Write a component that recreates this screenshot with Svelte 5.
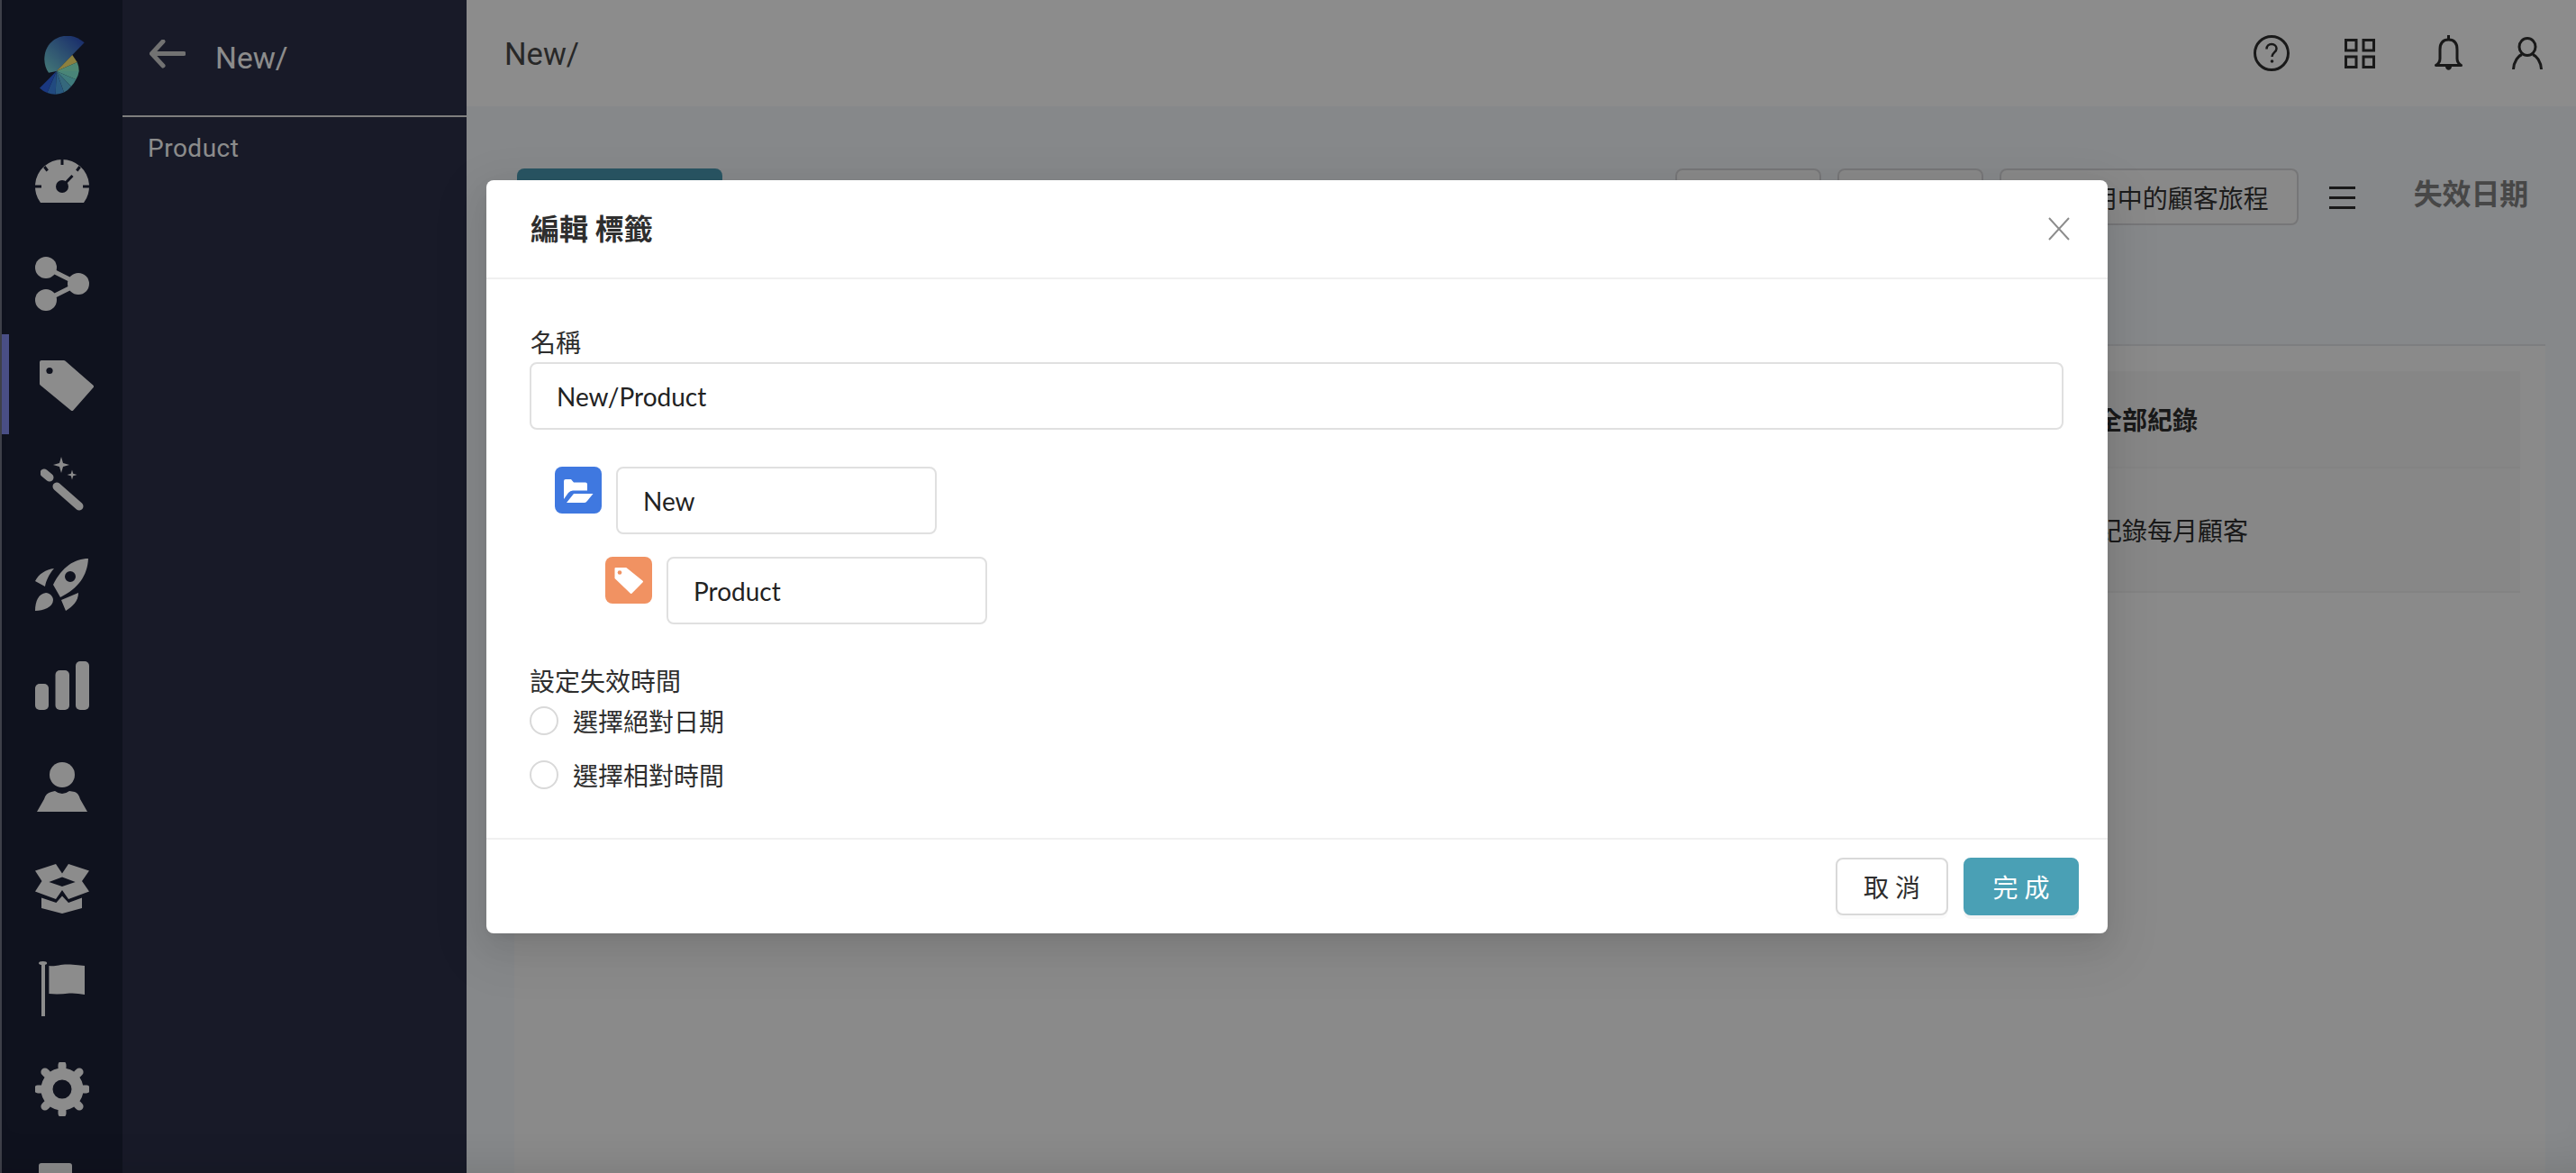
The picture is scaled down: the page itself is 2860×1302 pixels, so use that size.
<script>
  const cx = 67.7, cy = 80;
  const fanPoints = [
    [90.7, 70], [92.7, 80], [89.3, 89.3], [84, 97], [76, 103.6], [66.7, 105.7], [57.3, 104], [49, 98.7]
  ];
  const fanColors = ['#90f7d1', '#86f2da', '#73e0e2', '#62bde2', '#4ea4e9', '#3c87e9', '#3066e9'];
  const fan = fanColors.map((fill, i) => {
    const start = fanPoints[i];
    const end = fanPoints[i + 1];
    return { fill, d: `M${cx} ${cy}L${start[0]} ${start[1]}A25 25 0 0 1 ${end[0]} ${end[1]}Z` };
  });
  const gearTeeth = [0, 45, 90, 135, 180, 225, 270, 315];
</script>

<div class="app">
  <nav class="rail">
    <div class="logo">
      <svg width="50" height="65" viewBox="49 41 50 65" aria-hidden="true">
        <defs>
          <linearGradient id="lg" x1="1" y1="0" x2="0" y2="1">
            <stop offset="0.1" stop-color="#3156c4" />
            <stop offset="1" stop-color="#7ddeda" />
          </linearGradient>
        </defs>
        <path d="M67.7 80L98.7 48.3C92 43 86 40.7 80 40.7C65 40.7 54.3 52 54.3 66.7C54.3 72 56 78 59 81.7Z" fill="url(#lg)" />
        <path d="M67.7 80L85.3 62L90.7 70Z" fill="#ffe974" />
        {#each fan as w}
          <path d={w.d} fill={w.fill} />
        {/each}
      </svg>
    </div>

    <div class="cell">
      <svg width="60" height="48" viewBox="0 0 60 48" aria-hidden="true">
        <path d="M6 48A30 30 0 1 1 54 48Z" fill="#fff" />
        <g stroke="#1d2137" stroke-width="3" fill="none">
          <path d="M30 0V6M10.3 8L13.7 12.5M49.7 8L46.3 12.5M0 30H7M53 30H60" />
          <path d="M30 30L41.5 18" />
        </g>
        <circle cx="30" cy="30" r="7" fill="#1d2137" />
      </svg>
    </div>
    <div class="cell">
      <svg class="share-icon" width="60" height="60" viewBox="0 0 60 60" aria-hidden="true">
        <path d="M12 12L48 30L12 48" fill="none" stroke="#fff" stroke-width="5" />
        <circle cx="12" cy="12" r="12" fill="#fff" />
        <circle cx="48" cy="30" r="12" fill="#fff" />
        <circle cx="12" cy="48" r="12" fill="#fff" />
      </svg>
    </div>
    <div class="cell active">
      <span class="marker"></span>
      <svg class="tag-icon" width="60" height="56" viewBox="0 0 60 56" aria-hidden="true">
        <path d="M2 2H27L58 29L36 54L2 26Z" fill="#fff" stroke="#fff" stroke-width="4" stroke-linejoin="round" />
        <circle cx="11" cy="11.5" r="3.6" fill="#1d2137" />
      </svg>
    </div>
    <div class="cell">
      <svg width="48" height="61" viewBox="45 508 48 61" aria-hidden="true">
        <path d="M49 526L55 531" stroke="#fff" stroke-width="9" stroke-linecap="round" fill="none" />
        <path d="M63 541L88 563" stroke="#fff" stroke-width="9" stroke-linecap="round" fill="none" />
        <path d="M68 508L70 515L77 517L70 519L68 526L66 519L59 517L66 515Z" fill="#fff" />
        <path d="M80 522.5L81.2 526.8L85.5 528L81.2 529.2L80 533.5L78.8 529.2L74.5 528L78.8 526.8Z" fill="#fff" />
      </svg>
    </div>
    <div class="cell">
      <svg width="60" height="59" viewBox="38 621 60 59" aria-hidden="true">
        <path fill-rule="evenodd" d="M97 621C82 621 68 630 58 650L66 664C86 654 96 640 97 621ZM83 641A6 6 0 1 1 71 641A6 6 0 1 1 83 641Z" fill="#fff" />
        <path d="M38 646C42 638 50 633 59 632C53 639 50 646 49 652Z" fill="#fff" />
        <path d="M67 667L86 659C86 668 80 674 72 679Z" fill="#fff" />
        <path d="M38 679C38 668 42 660 50 659C54 659 58 663 58 667C58 675 47 679 38 679Z" fill="#fff" />
      </svg>
    </div>
    <div class="cell">
      <svg width="60" height="54" viewBox="0 0 60 54" aria-hidden="true">
        <rect x="0" y="25" width="15" height="29" rx="5" fill="#fff" />
        <rect x="22.5" y="10" width="15.5" height="44" rx="5" fill="#fff" />
        <rect x="45" y="0" width="15" height="54" rx="5" fill="#fff" />
      </svg>
    </div>
    <div class="cell">
      <svg width="56" height="56" viewBox="40 845 56 56" aria-hidden="true">
        <circle cx="68" cy="860" r="14" fill="#fff" />
        <path d="M40 901L48 887Q50 880 56 879L60 878Q68 884 76 878L82 879Q86 880 88 887L96 901Z" fill="#fff" />
      </svg>
    </div>
    <div class="cell">
      <svg class="box-icon" width="60" height="55" viewBox="0 0 60 55" aria-hidden="true">
        <path fill-rule="evenodd" d="M0 7.5L23 0L30 10.5L37 0L60 7.5L52 19L60 30.5L37 39L30 29L23 39L0 30.5L7.5 19ZM15.4 20L30 25L44.7 20L30 14.5Z" fill="#fff" />
        <path d="M7 37.5L23.4 43L30 35.5L37 43L52 37.5V49L30 55L7 49Z" fill="#fff" />
      </svg>
    </div>
    <div class="cell">
      <svg class="flag-icon" width="51" height="61" viewBox="0 0 51 61" aria-hidden="true">
        <rect x="3" y="2" width="4" height="59" fill="#fff" />
        <ellipse cx="4.6" cy="2" rx="4.6" ry="2" fill="#fff" />
        <path d="M11.4 5C20 6 22 3 35 3.500Q44 4 51 5V37Q42 35 34 35.500Q22 37 11.400 36Z" fill="#fff" />
      </svg>
    </div>
    <div class="cell">
      <svg width="60" height="60" viewBox="0 0 60 60" aria-hidden="true">
        <circle cx="30" cy="30" r="17" fill="none" stroke="#fff" stroke-width="13" />
        {#each gearTeeth as a}
          <path d="M30 6V3" stroke="#fff" stroke-width="9" stroke-linecap="round" transform="rotate({a} 30 30)" />
        {/each}
      </svg>
    </div>
    <div class="cell">
      <svg class="last-icon" width="60" height="60" viewBox="0 0 60 60" aria-hidden="true">
        <rect x="4" y="0" width="37" height="60" rx="3" fill="#fff" />
      </svg>
    </div>
  </nav>

  <aside class="side">
    <div class="side-head">
      <svg width="40" height="32" viewBox="0 0 40 32" aria-hidden="true">
        <path d="M38 15.500H3M15 2L2.500 15.500L15 29" fill="none" stroke="#cfcfcf" stroke-width="5" stroke-linecap="round" stroke-linejoin="round" />
      </svg>
      <span>New/</span>
    </div>
    <div class="side-item">Product</div>
  </aside>

  <main class="main">
    <header class="top">
      <h1>New/</h1>
      <div class="top-icons">
        <svg class="i-help" width="40" height="40" viewBox="0 0 40 40" aria-hidden="true">
          <circle cx="20" cy="20" r="18.500" fill="none" stroke="#2e2e2e" stroke-width="3" />
          <path d="M14.500 15.500C14.500 12 17 10 20 10C23.500 10 25.500 12.500 25.500 15C25.500 19 20.500 19.500 20.500 24" fill="none" stroke="#2e2e2e" stroke-width="2.500" />
          <circle cx="20.500" cy="29" r="1.800" fill="#2e2e2e" />
        </svg>
        <svg class="i-grid" width="34" height="33" viewBox="0 0 34 33" aria-hidden="true">
          <g fill="none" stroke="#2e2e2e" stroke-width="3">
            <rect x="1.500" y="1.500" width="11.500" height="11.500" />
            <rect x="21" y="1.500" width="11.500" height="11.500" />
            <rect x="1.500" y="20" width="11.500" height="11.500" />
            <rect x="21" y="20" width="11.500" height="11.500" />
          </g>
        </svg>
        <svg class="i-bell" width="31" height="40" viewBox="0 0 31 40" aria-hidden="true">
          <path d="M15.500 5C8.500 5 6 10 6 16V26C6 30 4 32 1.500 33.500H29.500C27 32 25 30 25 26V16C25 10 22.500 5 15.500 5Z" fill="none" stroke="#2e2e2e" stroke-width="3" stroke-linejoin="round" />
          <path d="M15.500 0V5" stroke="#2e2e2e" stroke-width="3" />
          <path d="M12 35C12.500 40 18.500 40 19 35Z" fill="#2e2e2e" />
        </svg>
        <svg class="i-user" width="34" height="36" viewBox="0 0 34 36" aria-hidden="true">
          <ellipse cx="17" cy="11" rx="9" ry="9.500" fill="none" stroke="#2e2e2e" stroke-width="3" />
          <path d="M1.500 36C2 27 7 21 11 19.500M32.500 36C32 27 27 21 23 19.500" fill="none" stroke="#2e2e2e" stroke-width="3" />
        </svg>
      </div>
    </header>

    <section class="content">
      <div class="toolbar">
        <button class="create" tabindex="-1" aria-hidden="true"></button>
        <div class="ghost"></div>
        <div class="ghost"></div>
        <div class="ghost wide">啟用中的顧客旅程</div>
        <span class="burger"><i></i><i></i><i></i></span>
        <span class="expire">失效日期</span>
      </div>
      <div class="card">
        <div class="thead"><span></span><span>全部紀錄</span></div>
        <div class="trow"><span></span><span>紀錄每月顧客</span></div>
      </div>
    </section>
  </main>

  <div class="overlay">
    <div class="modal">
      <div class="m-head">
        <h2>編輯 標籤</h2>
        <svg width="24" height="26" viewBox="0 0 24 26" aria-hidden="true">
          <path d="M1 1L23 25M23 1L1 25" fill="none" stroke="#8c8c8c" stroke-width="2" />
        </svg>
      </div>
      <div class="m-body">
        <label class="lbl" for="full">名稱</label>
        <input id="full" class="inp" value="New/Product" />

        <div class="tree-row lv1">
          <span class="tile blue">
            <svg width="52" height="52" viewBox="0 0 52 52" aria-hidden="true">
              <path d="M10 16Q10 14 12 14H18L21 17.500H34Q36 17.500 36 19.500V26.500H20Q17 26.500 15 29L10 36Z" fill="#fff" />
              <path d="M13 40L21 30H42.500L36 38Q34.500 40 33 40Z" fill="#fff" />
            </svg>
          </span>
          <input class="inp small" value="New" />
        </div>
        <div class="tree-row lv2">
          <span class="tile orange">
            <svg width="52" height="52" viewBox="0 0 52 52" aria-hidden="true">
              <path d="M11.500 13H23L41 27.500L28.700 40L11.500 23.500Z" fill="#fff" stroke="#fff" stroke-width="2" stroke-linejoin="round" />
              <circle cx="16" cy="17.500" r="2.300" fill="#f19262" />
            </svg>
          </span>
          <input class="inp small" value="Product" />
        </div>

        <div class="lbl expire-lbl">設定失效時間</div>
        <div class="radio"><span class="dot"></span><span>選擇絕對日期</span></div>
        <div class="radio"><span class="dot"></span><span>選擇相對時間</span></div>
      </div>
      <div class="m-foot">
        <button class="btn">取 消</button>
        <button class="btn primary">完 成</button>
      </div>
    </div>
  </div>
</div>

<style>
  :global(body) {
    margin: 0;
    font-family: Lato, "Noto Sans CJK TC", sans-serif;
    overflow: hidden;
  }
  .app {
    width: 2860px;
    height: 1302px;
    display: flex;
    overflow: hidden;
    position: relative;
    background: #f5f7fb;
  }
  .rail {
    width: 134px;
    flex: none;
    border-left: 2px solid #737788;
    background: #1d2137;
    height: 1302px;
    overflow: hidden;
  }
  .logo {
    height: 145px;
    display: flex;
    align-items: center;
    justify-content: center;
  }
  .cell {
    height: 112px;
    display: flex;
    align-items: center;
    justify-content: center;
    position: relative;
  }
  .cell svg { display: block; }
  .share-icon { margin-top: 4px; }
  .tag-icon { margin: 6px 0 0 10px; }
  .box-icon { margin-top: 2px; }
  .flag-icon { margin-left: -1px; }
  .marker {
    position: absolute;
    left: 0;
    top: 2px;
    width: 8px;
    height: 111px;
    background: #8791f5;
  }
  .side {
    width: 382px;
    flex: none;
    background: #2c314a;
    color: #fff;
    font-family: Roboto, sans-serif;
  }
  .side-head {
    height: 128px;
    border-bottom: 2px solid #e6e6e6;
    display: flex;
    align-items: center;
    padding-left: 30px;
    gap: 33px;
    font-size: 33.500px;
  }
  .side-head svg { margin-top: -8px; }
  .side-item {
    padding: 18px 0 0 28px;
    font-size: 28px;
    line-height: 33px;
    letter-spacing: 0.5px;
  }
  .main {
    flex: 1;
    min-width: 0;
    display: flex;
    flex-direction: column;
  }
  .top {
    height: 118px;
    flex: none;
    background: #fff;
    display: flex;
    align-items: center;
    justify-content: space-between;
    padding: 0 37px 0 42px;
    box-sizing: border-box;
  }
  .top h1 {
    margin: 2px 0 0;
    font: 400 34.500px/1 Roboto, sans-serif;
    color: #4a4a4a;
  }
  .top-icons {
    display: flex;
    align-items: center;
  }
  .i-grid { margin-left: 61px; }
  .i-bell { margin-left: 66px; }
  .i-user { margin-left: 55px; }
  .content {
    flex: 1;
    padding: 69px 34px 0 53px;
    display: flex;
    flex-direction: column;
  }
  .toolbar {
    display: flex;
    align-items: flex-start;
    height: 63px;
    padding: 0 19px 0 3px;
    gap: 18px;
  }
  .create {
    width: 228px;
    height: 63px;
    border: 0;
    border-radius: 8px;
    background: #4c9cb4;
    margin-right: auto;
    padding: 0;
  }
  .ghost {
    width: 162px;
    height: 63px;
    box-sizing: border-box;
    border: 2px solid #d8d8da;
    border-radius: 8px;
    background: #fafafa;
  }
  .ghost.wide {
    width: 332px;
    padding: 0 31px 0 0;
    display: flex;
    align-items: center;
    justify-content: flex-end;
    font-size: 28px;
    color: #333;
    white-space: nowrap;
  }
  .burger {
    width: 29px;
    margin: 20px 0 0 16px;
    display: flex;
    flex-direction: column;
    gap: 8px;
  }
  .burger i {
    display: block;
    height: 3px;
    background: #2e2e2e;
  }
  .expire {
    margin: 8px 0 0 47px;
    font-size: 32px;
    line-height: 40px;
    font-weight: 700;
    color: #828282;
    letter-spacing: -0.2px;
  }
  .card {
    margin-top: 132px;
    flex: 1;
    background: #fbfbfb;
    border-top: 2px solid #e4e6ea;
    padding: 28px 28px 0;
    font-size: 28px;
    color: #2e2e2e;
  }
  .thead, .trow {
    display: grid;
    grid-template-columns: 1fr 470px;
    align-items: center;
    box-sizing: border-box;
  }
  .thead {
    height: 108px;
    background: #f5f5f5;
    border-bottom: 2px solid #eeeeee;
    font-weight: 700;
  }
  .trow {
    height: 138px;
    background: #f6f6f6;
    border-bottom: 2px solid #eeeeee;
  }
  .overlay {
    position: absolute;
    inset: 0;
    background: rgba(0, 0, 0, 0.45);
    box-shadow: inset 0 -36px 40px -28px rgba(0, 0, 0, 0.1);
    padding: 200px 0 0 540px;
    box-sizing: border-box;
  }
  .modal {
    width: 1800px;
    height: 836px;
    background: #fff;
    border-radius: 8px;
    box-shadow: 0 6px 12px -8px rgba(0, 0, 0, 0.12), 0 12px 32px 0 rgba(0, 0, 0, 0.08), 0 18px 56px 16px rgba(0, 0, 0, 0.05);
    display: flex;
    flex-direction: column;
    color: #2e2e2e;
    font-size: 28px;
  }
  .m-head {
    height: 110px;
    flex: none;
    box-sizing: border-box;
    border-bottom: 2px solid #f0f0f0;
    display: flex;
    align-items: center;
    justify-content: space-between;
    padding: 0 42px 0 49px;
  }
  .m-head h2 {
    margin: 0;
    font-size: 32px;
    line-height: 44px;
    font-weight: 700;
    color: #2e2e2e;
  }
  .m-body {
    flex: 1;
    padding: 48px 48px 0 48px;
    display: flex;
    flex-direction: column;
  }
  .lbl {
    font-size: 28px;
    line-height: 44px;
    height: 44px;
    display: block;
    padding-left: 1px;
  }
  .inp {
    box-sizing: border-box;
    width: 1703px;
    height: 75px;
    border: 2px solid #e0e0e0;
    border-radius: 8px;
    padding: 0 28px;
    font: 400 28px Lato, sans-serif;
    color: #222;
    background: #fff;
    outline: 0;
    display: block;
  }
  .inp.small { width: 356px; }
  .tree-row {
    display: flex;
    align-items: flex-start;
    gap: 16px;
    height: 100px;
  }
  .lv1 { margin: 41px 0 0 28px; }
  .lv2 { margin-left: 84px; }
  .tile {
    width: 52px;
    height: 52px;
    border-radius: 8px;
    flex: none;
  }
  .tile svg { display: block; }
  .blue { background: #3f78e0; }
  .orange { background: #f19262; }
  .expire-lbl {
    margin-top: 20px;
    height: 32px;
    line-height: 36px;
    padding-left: 0;
  }
  .radio {
    display: flex;
    align-items: center;
    height: 60px;
    gap: 16px;
  }
  .dot {
    width: 32px;
    height: 32px;
    box-sizing: border-box;
    border: 2px solid #d9d9d9;
    border-radius: 50%;
    flex: none;
    background: #fff;
  }
  .m-foot {
    height: 106px;
    flex: none;
    box-sizing: border-box;
    border-top: 2px solid #f0f0f0;
    display: flex;
    justify-content: flex-end;
    align-items: flex-start;
    gap: 17px;
    padding: 20px 32px 0 0;
  }
  .btn {
    width: 125px;
    height: 64px;
    box-sizing: border-box;
    border: 2px solid #d9d9d9;
    border-radius: 8px;
    background: #fff;
    font: 400 28px Lato, "Noto Sans CJK TC", sans-serif;
    color: #2e2e2e;
    box-shadow: 0 4px 0 rgba(0, 0, 0, 0.015);
    padding: 0;
  }
  .btn.primary {
    width: 128px;
    background: #4aa0b5;
    border-color: #4aa0b5;
    color: #fff;
    box-shadow: 0 4px 0 rgba(0, 0, 0, 0.045);
  }
</style>
